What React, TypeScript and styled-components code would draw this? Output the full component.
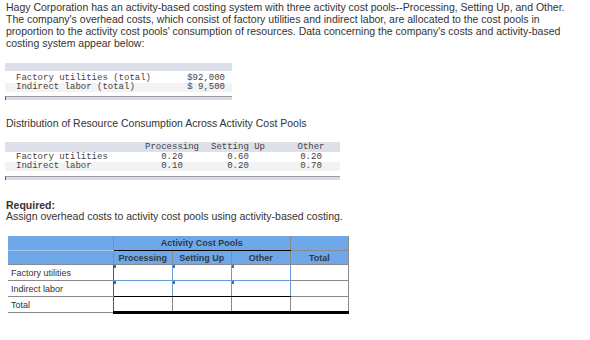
import React from "react";
import styled, { createGlobalStyle } from "styled-components";

const Global = createGlobalStyle`
  html, body { margin: 0; padding: 0; background: #fff; }
  body { font-family: "Liberation Sans", Arial, sans-serif; color: #333; }
`;

const Page = styled.div`
  padding: 1px 0 0 5px;
  width: 585px;
`;

const Intro = styled.p`
  margin: 0 0 0 1px;
  font-size: 10.5px;
  line-height: 12px;
  white-space: nowrap;
`;

const Caption = styled.p`
  margin: ${(p: { $top: number }) => p.$top}px 0 0 1px;
  font-size: 10.5px;
  line-height: 12px;
`;

const DataTable = styled.div<{ $width: number; $top: number }>`
  width: ${(p) => p.$width}px;
  margin-top: ${(p) => p.$top}px;
  font-family: "Liberation Mono", "Courier New", monospace;
  font-size: 9px;
  color: #444;
`;

const DataHead = styled.div<{ $cols: string; $h: number }>`
  display: grid;
  grid-template-columns: ${(p) => p.$cols};
  height: ${(p) => p.$h}px;
  line-height: ${(p) => p.$h}px;
  background: #dde0e9;
`;

const DataRow = styled.div<{ $cols: string; $alt?: boolean; $h: number }>`
  display: grid;
  grid-template-columns: ${(p) => p.$cols};
  height: ${(p) => p.$h}px;
  line-height: ${(p) => p.$h}px;
  background: ${(p) => (p.$alt ? "#f3f3f3" : "transparent")};
`;

const Spacer = styled.div<{ $h: number }>`
  height: ${(p) => p.$h}px;
`;

const Label = styled.span`
  padding-left: 11px;
  white-space: pre;
`;

const Amount = styled.span`
  text-align: right;
  padding-right: 7px;
  white-space: pre;
`;

const Centered = styled.span<{ $shift?: number }>`
  text-align: center;
  padding-left: ${(p) => p.$shift ?? 0}px;
  white-space: pre;
`;

const DataFoot = styled.div<{ $top: number }>`
  margin-top: ${(p) => p.$top}px;
  height: 3px;
  background: #d8dbe3;
  border-top: 1px solid #9a9ea8;
  border-left: 1px solid #555;
`;

const Required = styled.div`
  margin: 20px 0 0 1px;
  font-size: 10.5px;
  line-height: 11px;
`;

const Strong = styled.div`
  font-weight: bold;
`;

const Answer = styled.table`
  margin: 14px 0 0 3px;
  border-collapse: collapse;
  table-layout: fixed;
  width: 341px;
  font-family: "Liberation Sans", Arial, sans-serif;
  font-size: 9px;
  color: #333;
`;

const HeadCell = styled.th<{ $edge?: string; $under?: string; $h: number }>`
  background: #6fa8e8;
  height: ${(p) => p.$h}px;
  padding: 0;
  text-align: center;
  font-weight: bold;
  color: #2f3a48;
  border-left: ${(p) => (p.$edge ? `1px solid ${p.$edge}` : "none")};
  border-right: ${(p) => (p.$edge ? `1px solid ${p.$edge}` : "none")};
  border-bottom: 1px solid ${(p) => p.$under ?? "#8a8a8a"};
`;

const RowLabel = styled.td`
  height: 15px;
  padding: 0 0 0 3px;
  border-bottom: 1px solid #8a8a8a;
  border-right: 1px solid #555;
  white-space: nowrap;
`;

const InputCell = styled.td<{ $last?: boolean }>`
  position: relative;
  padding: 0;
  border: 1px solid #6b98d8;
  border-bottom: 1px solid ${(p) => (p.$last ? "#000" : "#6b98d8")};
  &::before {
    content: "";
    position: absolute;
    left: 0;
    top: 0;
    width: 2px;
    height: 3px;
    background: #2f6fd0;
  }
`;

const PlainCell = styled.td`
  padding: 0;
  border: 1px solid #8a8a8a;
`;

const TotalCell = styled.td`
  padding: 0;
  border-left: 1px solid #8a8a8a;
  border-right: 1px solid #8a8a8a;
  border-top: 1px solid #000;
  border-bottom: 3px solid #000;
`;

const cols1 = "1fr 80px";
const cols2 = "137px 60px 72px 1fr";

export default function App() {
  return (
    <>
      <Global />
      <Page>
        <Intro>
          Hagy Corporation has an activity-based costing system with three activity cost pools--Processing, Setting Up, and Other.
          <br />
          The company's overhead costs, which consist of factory utilities and indirect labor, are allocated to the cost pools in
          <br />
          proportion to the activity cost pools' consumption of resources. Data concerning the company's costs and activity-based
          <br />
          costing system appear below:
        </Intro>

        <DataTable $width={227} $top={14}>
          <DataHead $cols={cols1} $h={8} />
          <Spacer $h={2} />
          <DataRow $cols={cols1} $h={10}>
            <Label>Factory utilities (total)</Label>
            <Amount>$92,000</Amount>
          </DataRow>
          <DataRow $cols={cols1} $h={9} $alt>
            <Label>Indirect labor (total)</Label>
            <Amount>$ 9,500</Amount>
          </DataRow>
          <DataFoot $top={4} />
        </DataTable>

        <Caption $top={17}>Distribution of Resource Consumption Across Activity Cost Pools</Caption>

        <DataTable $width={335} $top={13}>
          <DataHead $cols={cols2} $h={10}>
            <span />
            <Centered>Processing</Centered>
            <Centered>Setting Up</Centered>
            <Centered $shift={8}>Other</Centered>
          </DataHead>
          <DataRow $cols={cols2} $h={10}>
            <Label>Factory utilities</Label>
            <Centered>0.20</Centered>
            <Centered>0.60</Centered>
            <Centered $shift={8}>0.20</Centered>
          </DataRow>
          <DataRow $cols={cols2} $h={9} $alt>
            <Label>Indirect labor</Label>
            <Centered>0.10</Centered>
            <Centered>0.20</Centered>
            <Centered $shift={8}>0.70</Centered>
          </DataRow>
          <DataFoot $top={5} />
        </DataTable>

        <Required>
          <Strong>Required:</Strong>
          <div>Assign overhead costs to activity cost pools using activity-based costing.</div>
        </Required>

        <Answer>
          <colgroup>
            <col style={{ width: 105 }} />
            <col style={{ width: 59 }} />
            <col style={{ width: 59 }} />
            <col style={{ width: 59 }} />
            <col style={{ width: 58 }} />
          </colgroup>
          <thead>
            <tr>
              <HeadCell $h={14} $under="#a6c6ee" />
              <HeadCell $h={14} colSpan={3} $edge="#8a8a8a" $under="#000">
                Activity Cost Pools
              </HeadCell>
              <HeadCell $h={14} $edge="#8a8a8a" />
            </tr>
            <tr>
              <HeadCell $h={13} />
              <HeadCell $h={13} $edge="#8a8a8a">Processing</HeadCell>
              <HeadCell $h={13} $edge="#8a8a8a">Setting Up</HeadCell>
              <HeadCell $h={13} $edge="#8a8a8a">Other</HeadCell>
              <HeadCell $h={13} $edge="#8a8a8a">Total</HeadCell>
            </tr>
          </thead>
          <tbody>
            <tr>
              <RowLabel>Factory utilities</RowLabel>
              <InputCell />
              <InputCell />
              <InputCell />
              <PlainCell />
            </tr>
            <tr>
              <RowLabel>Indirect labor</RowLabel>
              <InputCell $last />
              <InputCell $last />
              <InputCell $last />
              <PlainCell />
            </tr>
            <tr>
              <RowLabel>Total</RowLabel>
              <TotalCell />
              <TotalCell />
              <TotalCell />
              <TotalCell />
            </tr>
          </tbody>
        </Answer>
      </Page>
    </>
  );
}
